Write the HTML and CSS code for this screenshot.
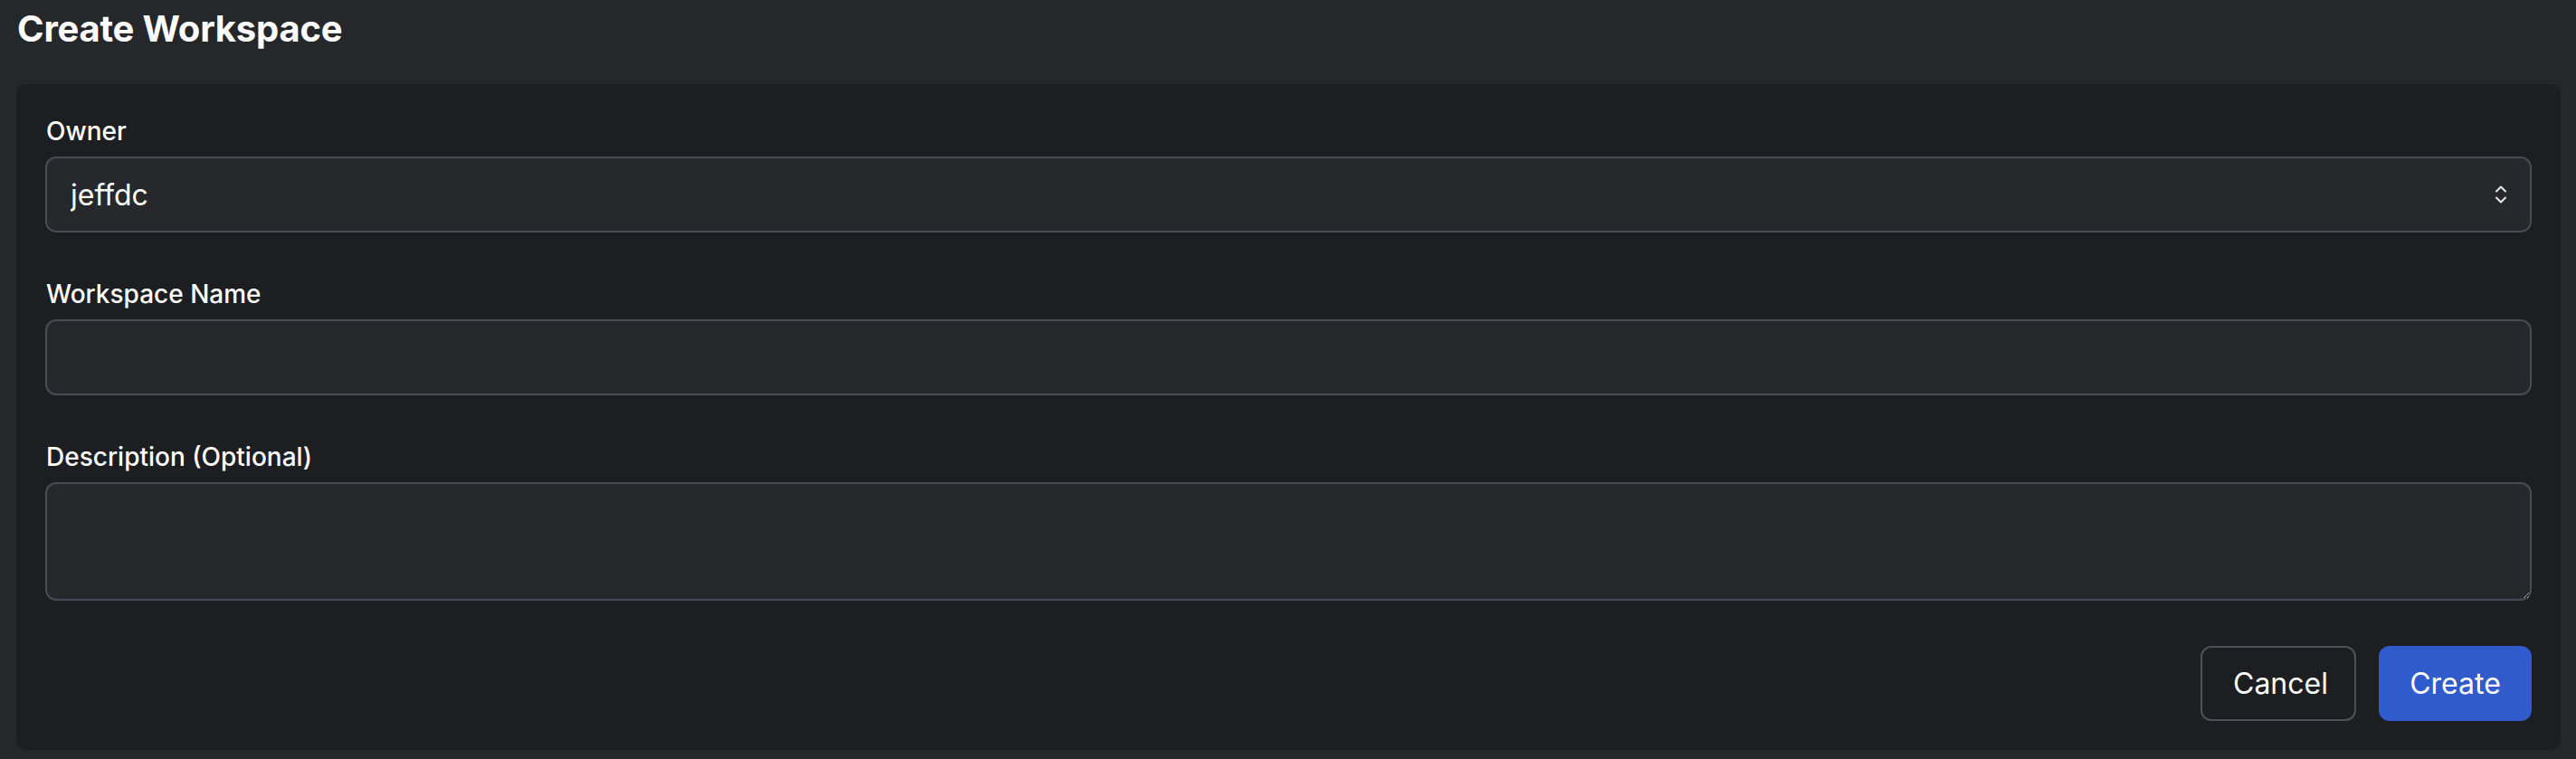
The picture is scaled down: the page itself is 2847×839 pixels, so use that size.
FILE: index.html
```html
<!DOCTYPE html>
<html lang="en">
<head>
<meta charset="utf-8">
<title>Create Workspace</title>
<link rel="stylesheet" href="styles.css">
</head>
<body>
<div class="page">
  <h1 class="title">Create Workspace</h1>
  <form class="card">
    <div class="field">
      <label class="label" for="owner">Owner</label>
      <div class="select-wrap">
        <select id="owner" class="control select">
          <option>jeffdc</option>
        </select>
        <svg class="chevrons" width="14" height="22" viewBox="0 0 14 22" aria-hidden="true">
          <path d="M2 7.5 L7 2.5 L12 7.5" fill="none" stroke="#e8e8ea" stroke-width="2" stroke-linecap="round" stroke-linejoin="round"/>
          <path d="M2 14.5 L7 19.5 L12 14.5" fill="none" stroke="#e8e8ea" stroke-width="2" stroke-linecap="round" stroke-linejoin="round"/>
        </svg>
      </div>
    </div>
    <div class="field">
      <label class="label" for="name">Workspace Name</label>
      <input id="name" class="control" type="text">
    </div>
    <div class="field">
      <label class="label" for="desc">Description (Optional)</label>
      <textarea id="desc" class="control textarea"></textarea>
    </div>
    <div class="actions">
      <button type="button" class="btn btn-cancel">Cancel</button>
      <button type="button" class="btn btn-create">Create</button>
    </div>
  </form>
</div>
</body>
</html>
```
FILE: styles.css
```css
* { box-sizing: border-box; }

html, body {
  margin: 0;
  height: 839px;
  overflow: hidden;
  background: #26272b;
  color: #ffffff;
  font-family: Inter, "Noto Sans", "Liberation Sans", sans-serif;
}

.page {
  padding: 2px 17px 0 18px;
  height: 839px;
  overflow: hidden;
}

.title {
  margin: 0 0 31px 1px;
  font-size: 40px;
  line-height: 60px;
  font-weight: 700;
  letter-spacing: -0.2px;
  color: #ffffff;
}

.card {
  background: #1d1e22;
  border-radius: 10px;
  padding: 32px;
  display: flex;
  flex-direction: column;
}

.field {
  display: flex;
  flex-direction: column;
  gap: 8px;
}

.field + .field {
  margin-top: 48px;
}

.label {
  font-size: 28px;
  line-height: 40px;
  font-weight: 500;
  color: #ffffff;
  padding-left: 1px;
}

.control {
  display: block;
  width: 100%;
  height: 84px;
  margin: 0;
  border: 2px solid #4a4b54;
  border-radius: 12px;
  background: #27282c;
  color: #ffffff;
  font-family: inherit;
  font-size: 32px;
  padding: 0 26px;
  outline: none;
}

.select-wrap {
  position: relative;
}

.select {
  appearance: none;
  -webkit-appearance: none;
}

.chevrons {
  position: absolute;
  right: 27px;
  top: 31px;
  pointer-events: none;
}

.textarea {
  height: 131px;
  padding: 16px 26px;
  resize: vertical;
}

.actions {
  margin-top: 50px;
  display: flex;
  justify-content: flex-end;
  gap: 25px;
}

.btn {
  height: 83px;
  padding: 0 34px;
  border-radius: 12px;
  font-family: inherit;
  font-size: 32px;
  font-weight: 400;
  color: #ffffff;
  cursor: pointer;
}

.btn-cancel {
  background: transparent;
  border: 2px solid #4f5058;
  width: 172px;
}

.btn-create {
  background: #2f5bcd;
  border: none;
  width: 169px;
}
```
